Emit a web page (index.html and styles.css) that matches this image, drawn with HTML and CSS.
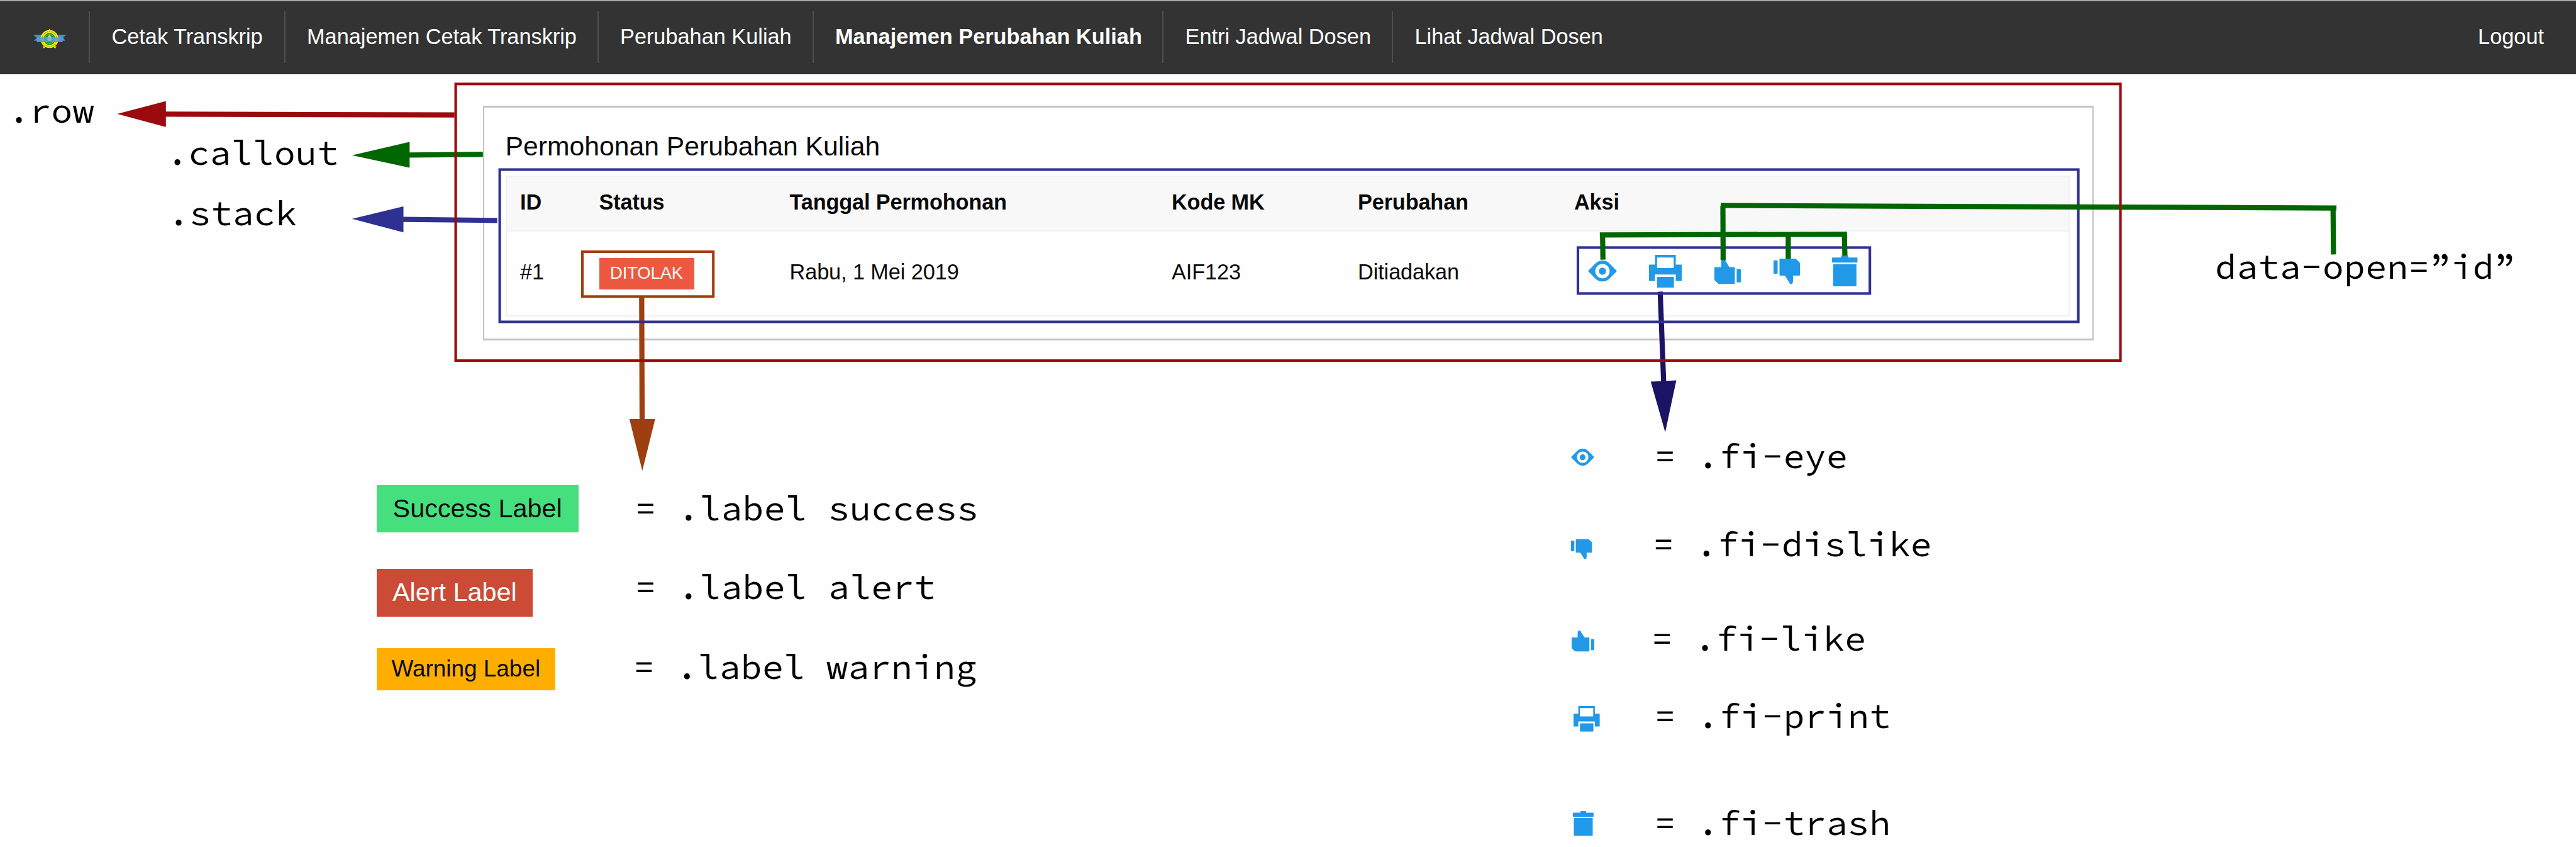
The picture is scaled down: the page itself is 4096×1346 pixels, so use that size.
FILE: index.html
```html
<!DOCTYPE html>
<html lang="id">
<head>
<meta charset="utf-8">
<title>Manajemen Perubahan Kuliah</title>
<link rel="stylesheet" href="styles.css">
</head>
<body>
<svg class="sprite" width="0" height="0">
  <symbol id="fi-eye" viewBox="175 193 125 122" preserveAspectRatio="none">
    <path fill-rule="evenodd" d="M175 254 L205 213 Q219 193 237.500 193 Q256 193 270 213 L300 254 L270 295 Q256 315 237.500 315 Q219 315 205 295 Z M237.500 213 A31 41.500 0 1 0 237.500 296 A31 41.500 0 1 0 237.500 213 Z"/>
    <ellipse cx="237.500" cy="255" rx="15.500" ry="21"/>
  </symbol>
  <symbol id="fi-print" viewBox="441 159 143 189" preserveAspectRatio="none">
    <path fill-rule="evenodd" d="M470 159 H555 Q557 159 557 162 V215 H582 Q584 215 584 218 V307 Q584 310 582 310 H557 V273 H467 V310 H443 Q441 310 441 307 V218 Q441 215 443 215 H467 V162 Q467 159 470 159 Z M476 174 V235 H548 V174 Z"/>
    <rect x="476" y="286" width="73" height="62" rx="2"/>
  </symbol>
  <symbol id="fi-like" viewBox="725 181 115 148" preserveAspectRatio="none">
    <path d="M755 230 V200 Q756 181 763 181 Q770 181 774 196 L790 230 H811 Q814 230 814 234 V325 Q814 329 811 329 H744 L727 308 Q725 305 725 301 V234 Q725 230 728 230 Z"/>
    <rect x="822" y="241" width="18" height="78" rx="4"/>
  </symbol>
  <symbol id="fi-trash" viewBox="1237 165 111 179" preserveAspectRatio="none">
    <path d="M1279 165 H1306 Q1308 165 1308 168 V177 H1345 Q1348 177 1348 181 V202 Q1348 206 1345 206 H1240 Q1237 206 1237 202 V181 Q1237 177 1240 177 H1277 V168 Q1277 165 1279 165 Z"/>
    <rect x="1242" y="216" width="101" height="128" rx="2"/>
  </symbol>
</svg>

<header class="top-bar">
  <ul class="menu">
    <li class="brand">
      <svg class="logo" viewBox="0 0 64 39">
        <path d="M0 11.500 H16 V21 H48 V11.500 H64 L58 16 L62 23 H48 V24 H16 V23 H1 L7 17 Z" fill="#4f8fd0"/>
        <circle cx="31.500" cy="19.500" r="17.500" fill="#f4ec10"/>
        <path d="M31.500 0 l3 4 h-6 z M18 33 l2 5 l4 -3 z M45 33 l-2 5 l-4 -3 z" fill="#f4ec10"/>
        <circle cx="31.500" cy="19.500" r="14.500" fill="none" stroke="#a09a1c" stroke-width="1.500" stroke-dasharray="2 1.500"/>
        <circle cx="31.500" cy="19.500" r="11.500" fill="#0f9438"/>
        <circle cx="31.500" cy="19.500" r="9" fill="none" stroke="#c9d62a" stroke-width="1"/>
        <path d="M31.500 11 l7 9 h-14 z" fill="#b5cfae"/>
        <path d="M7 16 H57 V25.500 H7 Z" fill="#5b9bd5" opacity="0.880"/>
        <circle cx="31.500" cy="19.500" r="4" fill="#8fb2e0"/>
      </svg>
    </li>
    <li>Cetak Transkrip</li>
    <li>Manajemen Cetak Transkrip</li>
    <li>Perubahan Kuliah</li>
    <li class="active">Manajemen Perubahan Kuliah</li>
    <li>Entri Jadwal Dosen</li>
    <li>Lihat Jadwal Dosen</li>
  </ul>
  <a class="logout">Logout</a>
</header>

<main class="row">
  <section class="callout">
    <h5 class="title">Permohonan Perubahan Kuliah</h5>
    <table class="stack">
      <colgroup><col class="c-id"><col class="c-status"><col class="c-date"><col class="c-code"><col class="c-change"><col></colgroup>
      <thead>
        <tr><th>ID</th><th>Status</th><th>Tanggal Permohonan</th><th>Kode MK</th><th>Perubahan</th><th>Aksi</th></tr>
      </thead>
      <tbody>
        <tr>
          <td>#1</td>
          <td><span class="badge">DITOLAK</span></td>
          <td>Rabu, 1 Mei 2019</td>
          <td>AIF123</td>
          <td>Ditiadakan</td>
          <td>
            <div class="actions">
              <svg class="a-eye"><use href="#fi-eye"/></svg>
              <svg class="a-print"><use href="#fi-print"/></svg>
              <svg class="a-like"><use href="#fi-like"/></svg>
              <svg class="a-dislike"><use href="#fi-like"/></svg>
              <svg class="a-trash"><use href="#fi-trash"/></svg>
            </div>
          </td>
        </tr>
      </tbody>
    </table>
  </section>
</main>

<section class="legends">
  <div class="legend labels">
    <div class="entry e-success"><span class="label success">Success Label</span><code>= .label success</code></div>
    <div class="entry e-alert"><span class="label alert">Alert Label</span><code>= .label alert</code></div>
    <div class="entry e-warning"><span class="label warning">Warning Label</span><code>= .label warning</code></div>
  </div>
  <div class="legend icons">
    <div class="entry e-eye"><svg><use href="#fi-eye"/></svg><code>= .fi-eye</code></div>
    <div class="entry e-dislike"><svg><use href="#fi-like"/></svg><code>= .fi-dislike</code></div>
    <div class="entry e-like"><svg><use href="#fi-like"/></svg><code>= .fi-like</code></div>
    <div class="entry e-print"><svg><use href="#fi-print"/></svg><code>= .fi-print</code></div>
    <div class="entry e-trash"><svg><use href="#fi-trash"/></svg><code>= .fi-trash</code></div>
  </div>
</section>

<svg class="annotations" viewBox="0 0 4096 1346">
  <g class="brown"><path class="line" d="M1020.300 471 L1021 668"/><path class="head" d="M1000.800 666 H1041.700 L1021.300 748.200 Z"/></g>
  <g class="navy"><path class="line" d="M2639.800 463.500 L2645.300 607"/><path class="head" d="M2624.800 606.500 L2665.400 604.600 L2647.800 686.900 Z"/></g>
  <g class="red"><path class="line" d="M262 181.300 L722.700 182.700"/><path class="head" d="M186.400 181 L263.800 160.800 V201.800 Z"/></g>
  <g class="green"><path class="line" d="M650 246.300 L767.800 245.300"/><path class="head" d="M559.800 246.700 L651.300 225.600 V266.600 Z"/></g>
  <g class="blue"><path class="line" d="M640 348.700 L790.700 350.300"/><path class="head" d="M559.800 347.800 L641.500 328.100 V369.200 Z"/></g>
  <rect class="line blue" x="794.600" y="269.500" width="2510" height="242"/>
  <rect class="line blue" x="2509" y="393.400" width="464.200" height="73"/>
  <rect class="line brown" x="926" y="400" width="208.200" height="71.300"/>
  <g class="green">
    <path class="line" d="M2736.100 326.500 L3715.100 330.600"/>
    <path class="line" d="M2739.500 327 L2739.900 413.500"/>
    <path class="line" d="M3709.700 331 L3710.400 404.400"/>
    <path class="line" d="M2543.800 373.300 L2936.800 372.400"/>
    <path class="line" d="M2548.200 373 L2548.800 412.600"/>
    <path class="line" d="M2843.400 373 V411"/>
    <path class="line" d="M2932.600 373 L2933.500 406.100"/>
  </g>
  <rect class="line red" x="724.600" y="133.400" width="2647" height="439.700"/>
</svg>
<code class="note n-row">.row</code>
<code class="note n-callout">.callout</code>
<code class="note n-stack">.stack</code>
<code class="note n-open">data-open=”id”</code>
</body>
</html>
```
FILE: styles.css
```css
* { box-sizing: border-box; }
body {
  margin: 0;
  width: 4096px;
  height: 1346px;
  position: relative;
  overflow: hidden;
  background: #fefefe;
  color: #0a0a0a;
  font: 34.3px/40px "Liberation Sans", Arial, sans-serif;
}
.sprite { position: absolute; }
svg { fill: #2199e8; display: block; }

.top-bar {
  height: 117.500px;
  display: flex;
  justify-content: space-between;
  align-items: stretch;
  background: #333;
  border-top: 2px solid #a8a8a8;
  border-bottom: 1px solid #222;
  color: #fefefe;
}
.menu {
  display: grid;
  grid-template-columns: 143px 310.500px 498px 342px 556.500px 365px auto;
  margin: 16px 0;
  padding: 0;
  list-style: none;
  height: 82px;
}
.menu li {
  padding-left: 34.500px;
  line-height: 81px;
  border-right: 2px solid #4e4e4e;
  white-space: nowrap;
}
.menu li:last-child { border-right: 0; }
.menu .brand { padding: 27.700px 0 0 52.500px; }
.logo { width: 52.300px; height: 32px; }
.active { font-weight: bold; }
.logout { line-height: 113px; padding-right: 51px; }

.row { margin: 50px 0 0 767.500px; width: 2561px; }
.callout {
  height: 373px;
  border: 3px solid #c2c2c2;
  border-width: 3px 2px;
  background: #fff;
  padding: 41px 36px 0 34px;
}
.title { margin: 0 0 27.500px; font-size: 42.700px; font-weight: normal; line-height: 40px; }
.stack {
  width: 2487px;
  table-layout: fixed;
  border-collapse: separate;
  border-spacing: 0;
  border: 2px solid #f1f1f1;
  background: #fefefe;
}
.c-id { width: 125px; }
.c-status { width: 303px; }
.c-date { width: 607.500px; }
.c-code { width: 296px; }
.c-change { width: 344px; }
th, td { padding: 0 0 5px 22px; text-align: left; vertical-align: middle; }
th:first-child, td:first-child { padding-left: 21.500px; }
th { height: 87px; background: #f8f8f8; border-bottom: 2px solid #f1f1f1; letter-spacing: -0.15px; }
td { height: 133px; letter-spacing: -0.1px; }
.badge {
  display: block;
  width: 151px;
  height: 50.500px;
  margin-top: 5.500px;
  background: #ed5840;
  color: #fefefe;
  font-size: 27.400px;
  line-height: 47px;
  text-align: center;
}
.actions { display: flex; align-items: flex-start; height: 55px; padding-left: 21.500px; }
.a-eye { width: 46px; height: 33.500px; margin-top: 9.500px; }
.a-print { width: 52.500px; height: 52px; margin-left: 51.500px; }
.a-like { width: 42px; height: 40.500px; margin: 6px 0 0 51.700px; }
.a-dislike { width: 42px; height: 40.500px; margin: 6px 0 0 51.700px; transform: rotate(180deg); }
.a-trash { width: 40.700px; height: 49px; margin: 1.500px 0 0 51.600px; }

.legends { display: flex; margin-top: 144px; }
.legend { display: flex; flex-direction: column; flex: none; }
.entry { display: flex; align-items: flex-start; }
code {
  font-family: "Source Code Pro", "Noto Sans Mono CJK SC", "DejaVu Sans Mono", monospace;
  font-size: 56.900px;
  line-height: 60px;
  color: #000;
  white-space: pre;
}

.labels { width: 2497.600px; padding: 86px 0 0 598.700px; }
.label { height: 75.500px; font-size: 41.400px; line-height: 75px; text-align: center; }
.success { width: 321px; background: #45df7e; }
.alert { width: 248.300px; background: #cc4b37; color: #fefefe; }
.warning { width: 284.300px; height: 67.300px; background: #ffae00; font-size: 36.900px; line-height: 66px; }
.e-success { height: 133.500px; }
.e-alert { height: 125.500px; }
.labels code { margin-left: auto; width: 1488px; }
.e-success code { margin-top: 6.600px; }
.e-alert code { margin-top: -2px; }
.e-warning code { margin-top: -1px; width: 1490.700px; }

.icons { padding-top: 9.200px; }
.icons .entry { display: grid; grid-template-columns: 133px auto; }
.e-eye { height: 140.500px; }
.e-dislike { height: 149.500px; }
.e-like { height: 123.600px; }
.e-print { height: 170px; }
.e-trash { height: 60px; }
.e-eye svg { width: 37px; height: 27px; margin-top: 19.400px; }
.e-dislike svg { width: 33.700px; height: 31.800px; margin: 23.200px 0 0 0.900px; transform: rotate(180deg); }
.e-like svg { width: 36.500px; height: 33.600px; margin: 18.400px 0 0 1.300px; }
.e-print svg { width: 41.800px; height: 40.800px; margin: 14.700px 0 0 4.400px; }
.e-trash svg { width: 33px; height: 39px; margin: 11.300px 0 0 3.500px; }
.e-dislike code { margin-left: -2.700px; }
.e-like code { margin-left: -4.900px; }

.annotations { position: absolute; left: 0; top: 0; width: 4096px; height: 1346px; fill: none; }
.line { fill: none; stroke-width: 8.200; }
rect.line { stroke-width: 4.100; }
.red { stroke: #9b0a0f; }
.red .head { fill: #9b0a0f; }
.green { stroke: #006600; }
.green .head { fill: #006600; }
.blue { stroke: #2e3092; }
.blue .head { fill: #2e3092; }
.brown { stroke: #9d3f0e; }
.brown .head { fill: #9d3f0e; }
.navy { stroke: #1b1464; }
.navy .head { fill: #1b1464; }
.head { stroke: none; }
.note { position: absolute; }
.n-row { left: 13px; top: 145px; }
.n-callout { left: 265px; top: 212px; }
.n-stack { left: 267px; top: 308px; }
.n-open { left: 3522px; top: 393.300px; }
```
